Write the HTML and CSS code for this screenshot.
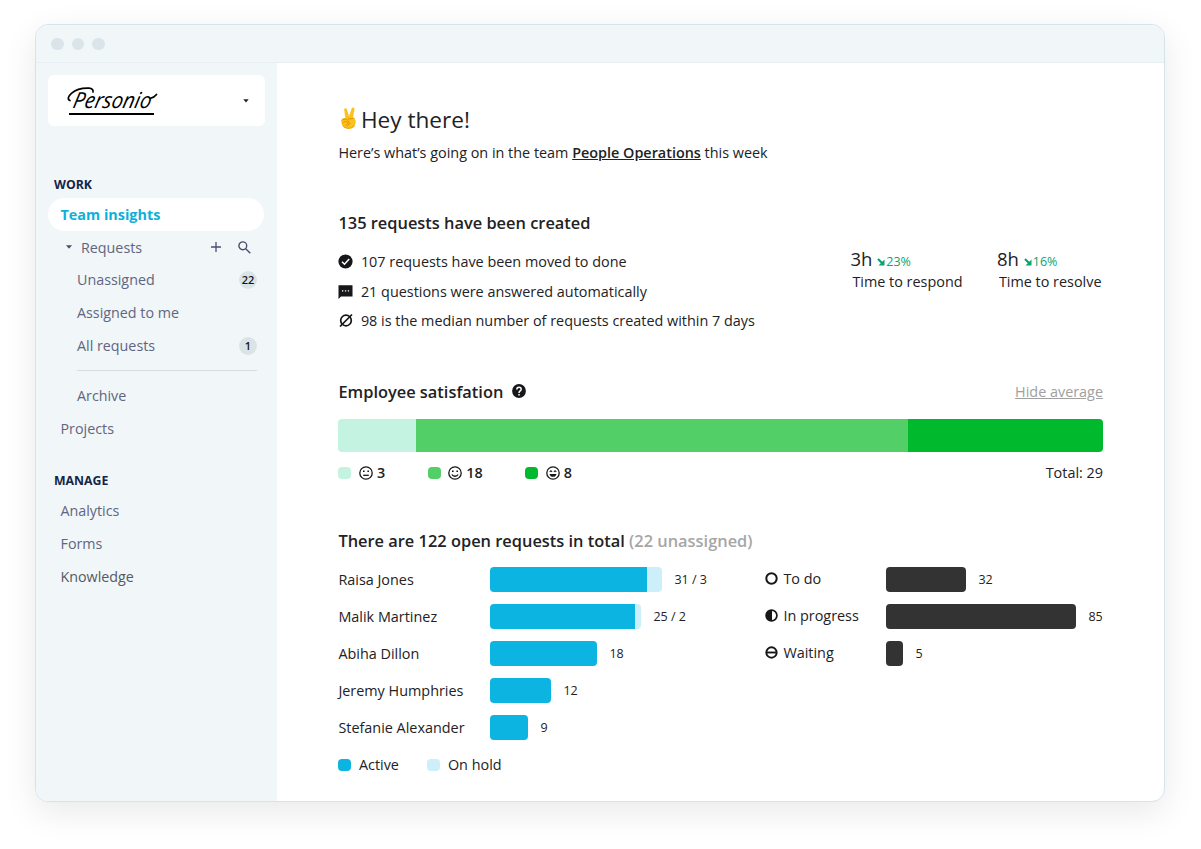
FILE: index.html
```html
<!DOCTYPE html>
<html lang="en">
<head>
    <meta charset="utf-8">
    <title>Team insights</title>
    <link rel="stylesheet" href="styles.css">
</head>
<body>
    <div class="window">
        <div class="titlebar">
            <span class="dot"></span>
            <span class="dot"></span>
            <span class="dot"></span>
        </div>
        <div class="content">
            <aside class="sidebar">
                <div class="company">
                    <svg class="logo" width="92" height="42" viewBox="0 -5 92 42">
                        <text class="logo-text" x="5" y="23" textLength="78" lengthAdjust="spacingAndGlyphs" transform="translate(5 0) skewX(-12)">Personio</text>
                        <path d="M3 15.500C-2.500 13.500 6 2.500 22 3.200C25 3.400 26.500 5 26 7M83 13.500C86 13 88 11.500 89.500 9.500" fill="none" stroke="#000" stroke-width="1.700" stroke-linecap="round"/>
                        <path d="M2 29H87" stroke="#000" stroke-width="1.800"/>
                    </svg>
                    <svg width="6" height="4" viewBox="0 0 6 4"><path d="M0.300 0.300H5.700L3 3.500Z" fill="#222"/></svg>
                </div>
                <nav class="menu">
                    <div class="menu-label">WORK</div>
                    <a class="item active">Team insights</a>
                    <div class="item group">
                        <svg class="caret" width="6" height="4" viewBox="0 0 6 4"><path d="M0 0.300H6L3 3.700Z" fill="#4b4d70"/></svg>
                        <span>Requests</span>
                        <svg class="plus" width="10" height="10" viewBox="0 0 10 10"><path d="M5 0V10M0 5H10" stroke="#4b4d70" stroke-width="1.300"/></svg>
                        <svg width="13" height="13" viewBox="0 0 13 13" fill="none" stroke="#4b4d70" stroke-width="1.400"><circle cx="4.800" cy="4.800" r="3.900"/><path d="M7.700 7.700L12.300 12.300"/></svg>
                    </div>
                    <a class="item sub">Unassigned <span class="badge">22</span></a>
                    <a class="item sub">Assigned to me</a>
                    <a class="item sub">All requests <span class="badge">1</span></a>
                    <div class="divider"></div>
                    <a class="item sub">Archive</a>
                    <a class="item">Projects</a>
                    <div class="menu-label manage">MANAGE</div>
                    <a class="item">Analytics</a>
                    <a class="item">Forms</a>
                    <a class="item last">Knowledge</a>
                </nav>
            </aside>

            <main class="main">
                <h1 class="hello">
                    <svg width="20" height="24" viewBox="0 0 20 24">
                        <path d="M7.300 12L6.200 4C6 2 8.500 1.600 9 3.500L11 10L13.700 2.500C14.400 0.600 16.900 1.300 16.500 3.300L15 11C18 12.500 18.300 16 17 19C15.500 22.500 12 23 8.500 22.300C5 21.500 3.200 18.500 3.400 15C3.200 12.500 5.500 11.500 7.300 12Z" fill="#fcc21b"/>
                        <path d="M3.800 14.500C5.500 12.700 8 12.500 9.500 14.500L11.500 17M5 17C7 14.500 9 15 10 17.500M10 13L15 12.500M12 17.500C11 19 9.500 19.500 8 19" fill="none" stroke="#d98a0b" stroke-width="0.900" stroke-linecap="round"/>
                        <path d="M5 19.500C7 23 13.500 23.500 16.500 19.500" fill="none" stroke="#f4a51c" stroke-width="1.200"/>
                    </svg>
                    <span>Hey there!</span>
                </h1>
                <p class="intro">Here’s what’s going on in the team <a class="team">People Operations</a> this week</p>

                <h2 class="title created">135 requests have been created</h2>
                <div class="summary">
                    <ul class="facts">
                        <li>
                            <svg width="15" height="15" viewBox="0 0 15 15"><circle cx="7.500" cy="7.500" r="7.100" fill="#17171a"/><path d="M4 7.700L6.500 10.200L11.200 5" fill="none" stroke="#fff" stroke-width="1.500"/></svg>
                            <span>107 requests have been moved to done</span>
                        </li>
                        <li>
                            <svg width="15" height="15" viewBox="0 0 15 15"><path d="M0.500 1.300H14.500V12.500H3L0.500 15Z" fill="#17171a"/><path d="M4 6.200h1.300v1.300h-1.300zM6.900 6.200h1.300v1.300h-1.300zM9.800 6.200h1.300v1.300h-1.300z" fill="#fff"/></svg>
                            <span>21 questions were answered automatically</span>
                        </li>
                        <li>
                            <svg width="15" height="15" viewBox="0 0 15 15" fill="none" stroke="#17171a" stroke-width="1.700"><circle cx="8" cy="7.500" r="5.300"/><path d="M2 13.500L14 1.500"/></svg>
                            <span>98 is the median number of requests created within 7 days</span>
                        </li>
                    </ul>
                    <div class="stats">
                        <div class="stat">
                            <div class="stat-value">3h
                                <span class="trend"><svg width="8" height="8" viewBox="0 0 8 8"><path d="M1 1L5 5" stroke="#0ba36d" stroke-width="2.200"/><path d="M7.500 1.500V7.500H1.500Z" fill="#0ba36d"/></svg>23%</span>
                            </div>
                            <div class="stat-label">Time to respond</div>
                        </div>
                        <div class="stat">
                            <div class="stat-value">8h
                                <span class="trend"><svg width="8" height="8" viewBox="0 0 8 8"><path d="M1 1L5 5" stroke="#0ba36d" stroke-width="2.200"/><path d="M7.500 1.500V7.500H1.500Z" fill="#0ba36d"/></svg>16%</span>
                            </div>
                            <div class="stat-label">Time to resolve</div>
                        </div>
                    </div>
                </div>

                <div class="satisfaction-head">
                    <h2 class="title">Employee satisfation</h2>
                    <svg class="help" width="14" height="14" viewBox="0 0 14 14"><circle cx="7" cy="7" r="6.900" fill="#17171a"/><path d="M4.800 5.400C4.800 2.500 9.200 2.500 9.200 5.200C9.200 7 7 6.900 7 8.900M7 9.900V11.400" fill="none" stroke="#fff" stroke-width="1.500"/></svg>
                    <a class="hide">Hide average</a>
                </div>
                <div class="satisfaction-bar">
                    <div class="neutral"></div>
                    <div class="good"></div>
                    <div class="great"></div>
                </div>
                <div class="scores">
                    <div class="score">
                        <span class="swatch neutral"></span>
                        <svg width="14" height="14" viewBox="0 0 14 14" fill="none" stroke="#17171a" stroke-width="1.300"><circle cx="7" cy="7" r="6.200"/><path d="M4.200 9.300H9.800"/><path d="M4 5.300H5.600M8.400 5.300H10" stroke-width="1.600"/></svg>
                        <b>3</b>
                    </div>
                    <div class="score">
                        <span class="swatch good"></span>
                        <svg width="14" height="14" viewBox="0 0 14 14" fill="none" stroke="#17171a" stroke-width="1.300"><circle cx="7" cy="7" r="6.200"/><path d="M3.900 8.500C5 10.800 9 10.800 10.100 8.500"/><path d="M4 5.300H5.600M8.400 5.300H10" stroke-width="1.600"/></svg>
                        <b>18</b>
                    </div>
                    <div class="score">
                        <span class="swatch great"></span>
                        <svg width="14" height="14" viewBox="0 0 14 14" fill="none" stroke="#17171a" stroke-width="1.300"><circle cx="7" cy="7" r="6.200"/><path d="M3.500 7.900H10.500C9.800 11.800 4.200 11.800 3.500 7.900Z" fill="#17171a" stroke="none"/><path d="M3.700 5.900L4.900 4.700L6.100 5.900M7.900 5.900L9.100 4.700L10.300 5.900" stroke-width="1.100"/></svg>
                        <b>8</b>
                    </div>
                    <span class="total">Total: 29</span>
                </div>

                <h2 class="title open">There are 122 open requests in total <span>(22 unassigned)</span></h2>
                <div class="charts">
                    <div class="people">
                        <div class="row"><span class="name">Raisa Jones</span><div class="bar"><i class="working" style="width: 157px"></i><i class="onhold" style="width: 15px"></i></div><span class="count">31 / 3</span></div>
                        <div class="row"><span class="name">Malik Martinez</span><div class="bar"><i class="working" style="width: 145px"></i><i class="onhold" style="width: 6px"></i></div><span class="count">25 / 2</span></div>
                        <div class="row"><span class="name">Abiha Dillon</span><div class="bar"><i class="working" style="width: 107px"></i></div><span class="count">18</span></div>
                        <div class="row"><span class="name">Jeremy Humphries</span><div class="bar"><i class="working" style="width: 61px"></i></div><span class="count">12</span></div>
                        <div class="row"><span class="name">Stefanie Alexander</span><div class="bar"><i class="working" style="width: 38px"></i></div><span class="count">9</span></div>
                    </div>
                    <div class="states">
                        <div class="row">
                            <span class="name"><svg width="13" height="13" viewBox="0 0 13 13"><circle cx="6.500" cy="6.500" r="5.200" fill="none" stroke="#17171a" stroke-width="2"/></svg>To do</span>
                            <div class="bar"><i class="dark" style="width: 80px"></i></div><span class="count">32</span>
                        </div>
                        <div class="row">
                            <span class="name"><svg width="13" height="13" viewBox="0 0 13 13"><circle cx="6.500" cy="6.500" r="5.400" fill="none" stroke="#17171a" stroke-width="1.700"/><path d="M7 1V12A5.500 5.500 0 0 1 7 1Z" fill="#17171a"/></svg>In progress</span>
                            <div class="bar"><i class="dark" style="width: 190px"></i></div><span class="count">85</span>
                        </div>
                        <div class="row">
                            <span class="name"><svg width="13" height="13" viewBox="0 0 13 13" fill="none" stroke="#17171a" stroke-width="1.900"><circle cx="6.500" cy="6.500" r="5.200"/><path d="M1 6.500H12"/></svg>Waiting</span>
                            <div class="bar"><i class="dark" style="width: 17px"></i></div><span class="count">5</span>
                        </div>
                    </div>
                </div>
                <div class="legend">
                    <div class="legend-item"><span class="swatch working"></span>Active</div>
                    <div class="legend-item"><span class="swatch onhold"></span>On hold</div>
                </div>
            </main>
        </div>
    </div>
</body>
</html>
```
FILE: styles.css
```css
* {
    box-sizing: border-box;
}

body {
    margin: 0;
    padding: 24px 36px 47px 35px;
    height: 849px;
    background-color: #fff;
    font-family: "Open Sans", "Noto Sans", sans-serif;
    font-size: 14.400px;
    color: #222225;
}

svg {
    display: block;
    flex: none;
}

.window {
    height: 778px;
    display: flex;
    flex-direction: column;
    border: 1px solid #d5e4ec;
    border-radius: 13px;
    background-color: #fff;
    overflow: hidden;
    box-shadow: 0 10px 34px rgba(0, 0, 0, 0.09);
}

.titlebar {
    height: 38px;
    display: flex;
    align-items: center;
    gap: 8px;
    padding: 1px 0 0 15px;
    background-color: #f1f6f9;
    border-bottom: 1px solid #e6eff4;
}

.dot {
    width: 12.500px;
    height: 12.500px;
    border-radius: 50%;
    background-color: #dae4e9;
}

.content {
    flex: 1;
    display: flex;
}

/* sidebar */
.sidebar {
    width: 241px;
    padding: 12px;
    background-color: #f1f6f9;
}

.company {
    height: 51px;
    display: flex;
    align-items: center;
    justify-content: space-between;
    padding: 0 16px 0 19px;
    border-radius: 6px;
    background-color: #fff;
}

.logo {
    overflow: visible;
}

.logo-text {
    font-family: "Open Sans", sans-serif;
    font-size: 22px;
    font-style: italic;
    font-weight: 500;
    fill: #000;
}

.menu {
    padding: 49px 1px 0 0;
}

.menu-label {
    height: 20px;
    margin: 0 0 3px 6px;
    line-height: 20px;
    font-size: 12.300px;
    font-weight: 700;
    color: #14244a;
}

.menu-label.manage {
    margin-top: 26px;
    margin-bottom: 4px;
}

.item {
    height: 32.800px;
    display: flex;
    align-items: center;
    padding: 0 7px 0 12.500px;
    font-size: 14.300px;
    color: #62657f;
}

.item.active {
    border-radius: 17px;
    background-color: #fff;
    font-weight: 700;
    font-size: 14.400px;
    color: #0cb1d8;
}

.item.sub {
    padding-left: 29px;
}

.item.last {
    color: #555a62;
}

.item.group {
    padding: 0 13px 0 18px;
}

.caret {
    margin-right: 9px;
}

.plus {
    margin: 0 17px 0 auto;
}

.badge {
    width: 18px;
    height: 18px;
    margin-left: auto;
    border-radius: 50%;
    background-color: #dae4e7;
    line-height: 18px;
    text-align: center;
    font-size: 11px;
    font-weight: 600;
    color: #17171a;
}

.divider {
    height: 1px;
    margin: 8px 7px 8px 29px;
    background-color: #d6dfe3;
}

/* main column */
.main {
    width: 826px;
    padding: 39px 0 0 61.400px;
}

.hello {
    height: 34px;
    display: flex;
    align-items: center;
    gap: 2.500px;
    margin: 0;
    font-size: 22.600px;
    font-weight: 400;
}

.hello svg {
    margin-top: -3px;
}

.intro {
    height: 22px;
    margin: 6px 0 0;
    line-height: 22px;
}

.team {
    font-weight: 600;
    text-decoration: underline;
}

.title {
    height: 22px;
    margin: 0;
    line-height: 22px;
    font-size: 16.400px;
    font-weight: 600;
}

.created {
    margin-top: 48px;
}

.summary {
    display: flex;
    margin-top: 12.500px;
}

.facts {
    flex: none;
    width: 512px;
    margin: 0;
    padding: 0;
    list-style: none;
}

.facts li {
    height: 29.800px;
    display: flex;
    align-items: center;
    gap: 7.500px;
}

.stats {
    display: flex;
    margin-top: 0.500px;
}

.stat {
    width: 146.500px;
    flex: none;
}

.stat-value {
    display: flex;
    align-items: center;
    gap: 5px;
    height: 24px;
    line-height: 24px;
    font-size: 18.500px;
}

.trend {
    display: flex;
    align-items: center;
    gap: 1px;
    padding-top: 5px;
    font-size: 12.500px;
    color: #0ba36d;
}

.stat-label {
    padding-left: 2px;
    line-height: 22px;
    white-space: nowrap;
}

.satisfaction-head {
    display: flex;
    align-items: center;
    gap: 9px;
    margin-top: 44.800px;
}

.help {
    margin-top: -2px;
}

.hide {
    margin-left: auto;
    color: #a0a0a0;
    text-decoration: underline;
}

.satisfaction-bar {
    height: 33px;
    display: flex;
    margin-top: 16px;
    border-radius: 4px;
    overflow: hidden;
}

.satisfaction-bar .neutral {
    width: 78px;
}

.satisfaction-bar .good {
    width: 491.500px;
}

.satisfaction-bar .great {
    flex: 1;
}

.neutral {
    background-color: #c4f4e1;
}

.good {
    background-color: #52cf66;
}

.great {
    background-color: #00b92d;
}

.scores {
    height: 22px;
    display: flex;
    align-items: center;
    gap: 42.300px;
    margin-top: 10px;
}

.score {
    display: flex;
    align-items: center;
}

.score svg {
    margin: 0 4px 0 7.700px;
}

.score b {
    font-weight: 600;
}

.total {
    margin-left: auto;
}

.swatch {
    width: 13px;
    height: 12px;
    border-radius: 4px;
}

.open {
    margin-top: 46px;
}

.open span {
    color: #a6a6a6;
}

.charts {
    display: flex;
    margin-top: 15px;
}

.people {
    width: 426px;
}

.row {
    height: 25px;
    display: flex;
    align-items: center;
    margin-bottom: 12px;
}

.people .name {
    width: 152px;
}

.states .name {
    width: 122px;
    display: flex;
    align-items: center;
    gap: 5.500px;
    padding: 0 0 1px 0.500px;
}

.bar {
    height: 25px;
    display: flex;
    border-radius: 4px;
    overflow: hidden;
}

.working {
    background-color: #0cb4e1;
}

.onhold {
    background-color: #cdeff9;
}

.dark {
    background-color: #333;
}

.count {
    margin-left: 12px;
    font-size: 12.500px;
}

.legend {
    display: flex;
    gap: 28.500px;
    margin-top: 2px;
}

.legend-item {
    height: 22px;
    display: flex;
    align-items: center;
    gap: 7.500px;
}
```
